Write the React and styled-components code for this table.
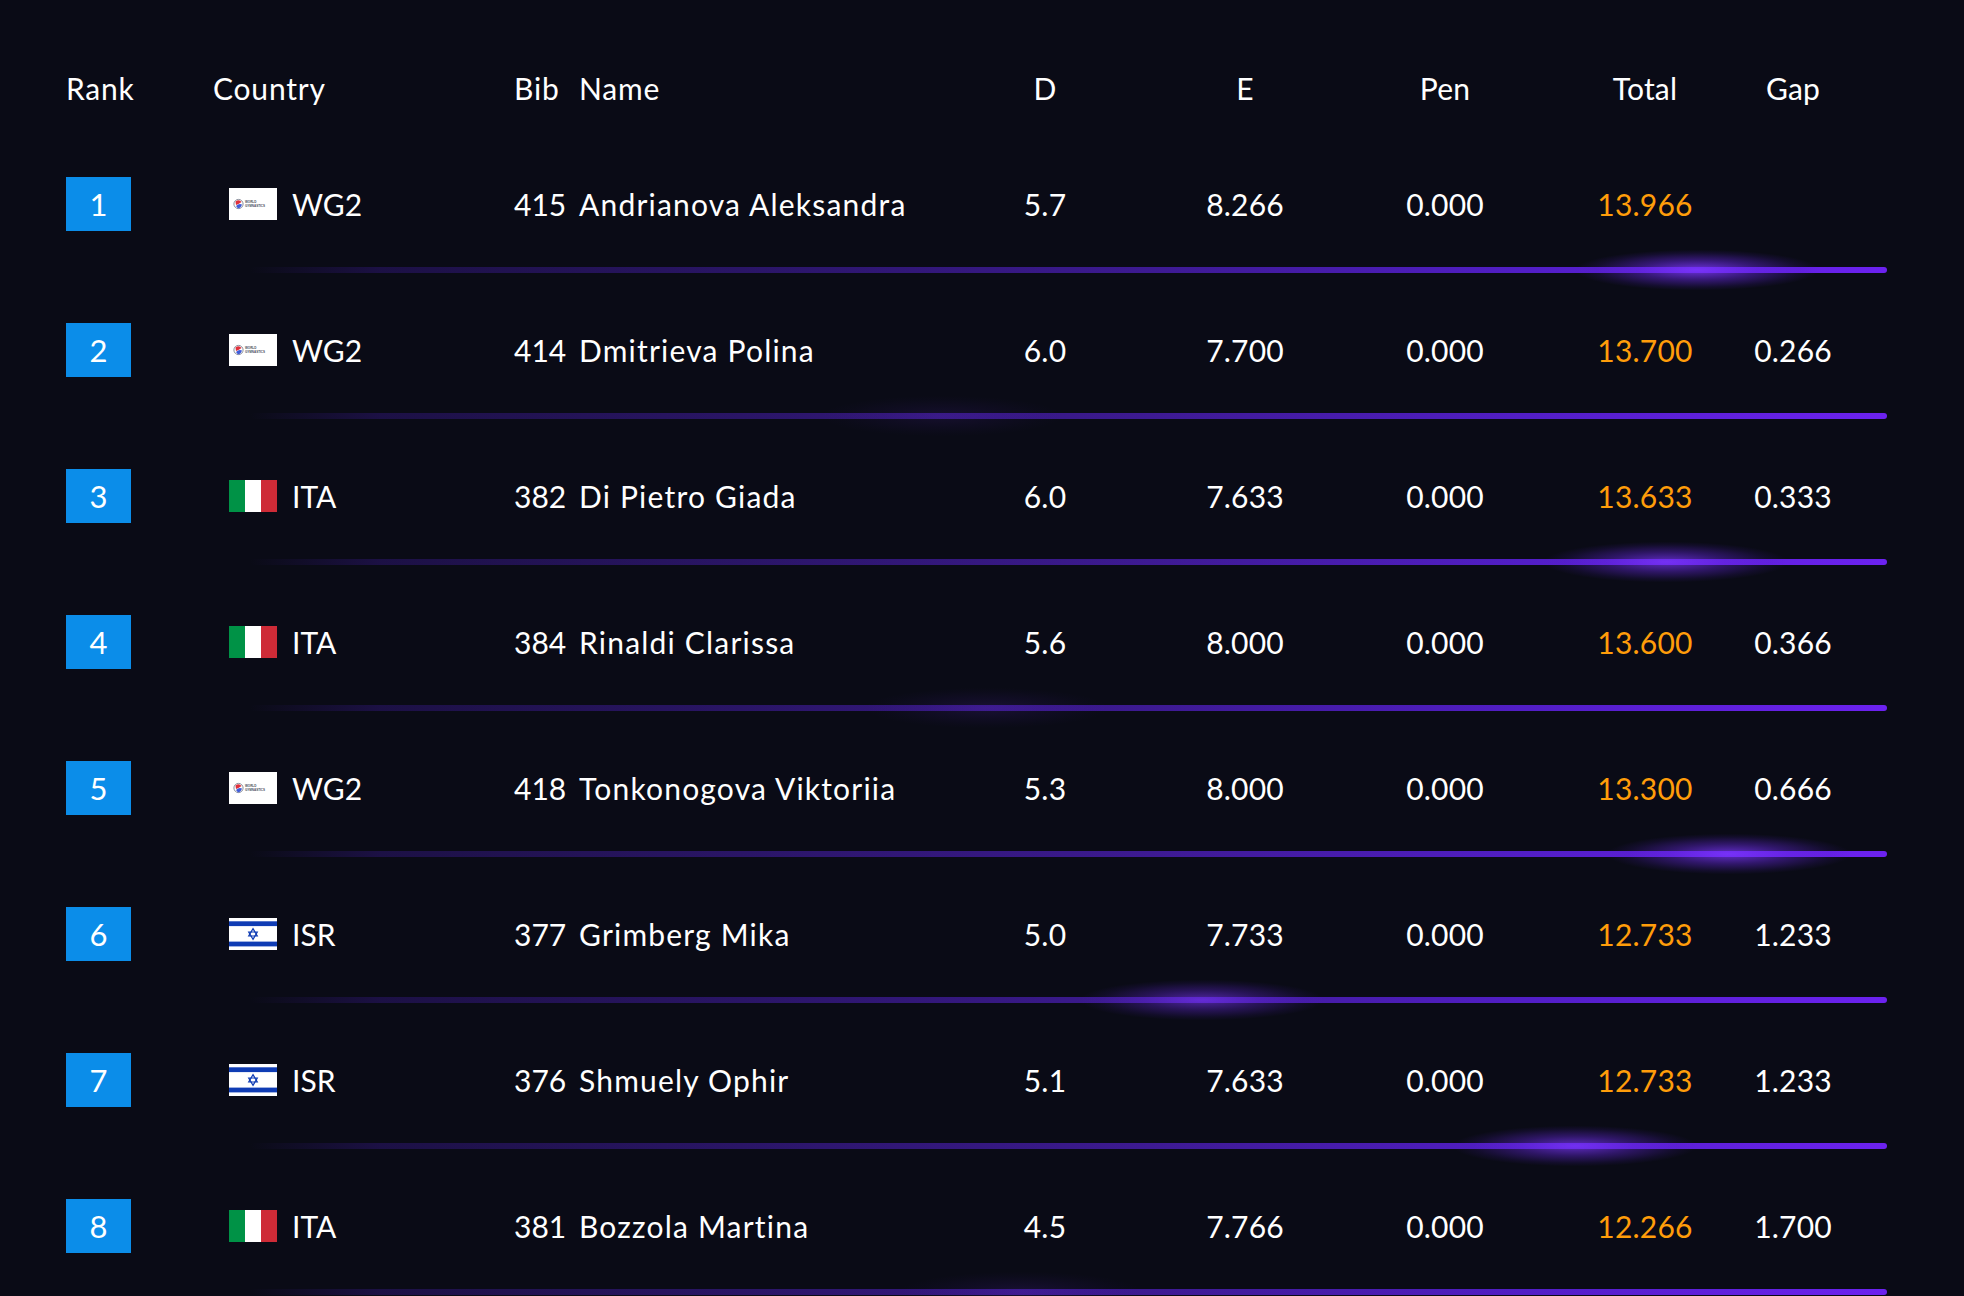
import React from "react";
import styled, { createGlobalStyle } from "styled-components";

const rows = [
  { rank: 1, flag: "wg", country: "WG2", bib: 415, name: "Andrianova Aleksandra", d: "5.7", e: "8.266", pen: "0.000", total: "13.966", gap: "", glowX: 1697, glow: 1 },
  { rank: 2, flag: "wg", country: "WG2", bib: 414, name: "Dmitrieva Polina", d: "6.0", e: "7.700", pen: "0.000", total: "13.700", gap: "0.266", glowX: 942, glow: 0.12 },
  { rank: 3, flag: "ita", country: "ITA", bib: 382, name: "Di Pietro Giada", d: "6.0", e: "7.633", pen: "0.000", total: "13.633", gap: "0.333", glowX: 1666, glow: 0.85 },
  { rank: 4, flag: "ita", country: "ITA", bib: 384, name: "Rinaldi Clarissa", d: "5.6", e: "8.000", pen: "0.000", total: "13.600", gap: "0.366", glowX: 987, glow: 0.15 },
  { rank: 5, flag: "wg", country: "WG2", bib: 418, name: "Tonkonogova Viktoriia", d: "5.3", e: "8.000", pen: "0.000", total: "13.300", gap: "0.666", glowX: 1729, glow: 0.9 },
  { rank: 6, flag: "isr", country: "ISR", bib: 377, name: "Grimberg Mika", d: "5.0", e: "7.733", pen: "0.000", total: "12.733", gap: "1.233", glowX: 1202, glow: 0.7 },
  { rank: 7, flag: "isr", country: "ISR", bib: 376, name: "Shmuely Ophir", d: "5.1", e: "7.633", pen: "0.000", total: "12.733", gap: "1.233", glowX: 1575, glow: 0.85 },
  { rank: 8, flag: "ita", country: "ITA", bib: 381, name: "Bozzola Martina", d: "4.5", e: "7.766", pen: "0.000", total: "12.266", gap: "1.700", glowX: 1021, glow: 0.15 },
];

const LINE_START = 250;

const WGFlag = () => (
  <svg width="48" height="32" viewBox="0 0 48 32">
    <rect width="48" height="32" fill="#fff" />
    <circle cx="9.5" cy="16" r="4.6" fill="none" stroke="#8a8f9c" strokeWidth="1" />
    <path d="M6.5 13.5 Q10 11 12.5 14 Q10 16 7 17 Z" fill="#e0303a" />
    <path d="M7 18 Q10 15 13 16.5 Q12 20 9 20.5 Z" fill="#3f5bd8" />
    <text x="16" y="15.2" fontSize="3" fontFamily="Liberation Sans, sans-serif" fontWeight="700" fill="#4a4f5c">
      WORLD
    </text>
    <text x="16" y="19" fontSize="3" fontFamily="Liberation Sans, sans-serif" fontWeight="700" fill="#4a4f5c">
      GYMNASTICS
    </text>
  </svg>
);

const ItaFlag = () => (
  <svg width="48" height="32" viewBox="0 0 48 32">
    <rect width="16" height="32" fill="#009246" />
    <rect x="16" width="16" height="32" fill="#fff" />
    <rect x="32" width="16" height="32" fill="#ce2b37" />
  </svg>
);

const IsrFlag = () => (
  <svg width="48" height="32" viewBox="0 0 48 32">
    <rect width="48" height="32" fill="#fff" />
    <rect y="3.3" width="48" height="4.8" fill="#0f3cb4" />
    <rect y="23.6" width="48" height="4.8" fill="#0f3cb4" />
    <polygon points="24,10.6 28.3,18 19.7,18" fill="none" stroke="#0f3cb4" strokeWidth="1.2" />
    <polygon points="24,21.4 28.3,14 19.7,14" fill="none" stroke="#0f3cb4" strokeWidth="1.2" />
  </svg>
);

const flags = { wg: WGFlag, ita: ItaFlag, isr: IsrFlag };

const App = () => {
  return (
    <Page>
      <GlobalStyle />
      <HeaderRow>
        <Label>Rank</Label>
        <Label>Country</Label>
        <Label>Bib</Label>
        <Label>Name</Label>
        <Num>D</Num>
        <Num>E</Num>
        <Num>Pen</Num>
        <Num>Total</Num>
        <Num>Gap</Num>
      </HeaderRow>
      {rows.map((r) => {
        const Flag = flags[r.flag];
        return (
          <Row key={r.rank}>
            <RowBody>
              <RankBox>{r.rank}</RankBox>
              <CountryCell>
                <FlagBox>
                  <Flag />
                </FlagBox>
                {r.country}
              </CountryCell>
              <span>{r.bib}</span>
              <Name>{r.name}</Name>
              <Num>{r.d}</Num>
              <Num>{r.e}</Num>
              <Num>{r.pen}</Num>
              <Num $accent>{r.total}</Num>
              <Num>{r.gap}</Num>
            </RowBody>
            <Divider>
              <Glow $x={r.glowX - LINE_START} $strength={r.glow} />
            </Divider>
          </Row>
        );
      })}
    </Page>
  );
};

export default App;

const GlobalStyle = createGlobalStyle`
  html, body {
    margin: 0;
    padding: 0;
    background: #0a0b16;
  }
  body {
    font-family: Lato, "Open Sans", sans-serif;
    color: #ffffff;
    overflow: hidden;
  }
`;

const Page = styled.div`
  min-height: 100vh;
  padding: 68px 0 0 66px;
  box-sizing: border-box;
  background: #0a0b16;
`;

const columns = "147px 301px 65px 366px 200px 200px 200px 200px 96px";

const HeaderRow = styled.div`
  display: grid;
  grid-template-columns: ${columns};
  align-items: center;
  height: 40px;
  margin-bottom: 32px;
  font-size: 30px;
`;

const Label = styled.span`
  letter-spacing: 0.8px;
`;

const Name = styled.span`
  letter-spacing: 1.2px;
`;

const Row = styled.div`
  display: flex;
  flex-direction: column;
  padding-bottom: 13px;
`;

const RowBody = styled.div`
  display: grid;
  grid-template-columns: ${columns};
  align-items: center;
  height: 127px;
  font-size: 30px;
`;

const Num = styled.span`
  text-align: center;
  letter-spacing: 0.2px;
  color: ${(p) => (p.$accent ? "#ff9d0a" : "#ffffff")};
`;

const RankBox = styled.div`
  width: 65px;
  height: 54px;
  background: #0b8de9;
  display: flex;
  align-items: center;
  justify-content: center;
  font-size: 31px;
`;

const CountryCell = styled.div`
  display: flex;
  align-items: center;
  gap: 15px;
  padding-left: 16px;
`;

const FlagBox = styled.div`
  width: 48px;
  height: 32px;
  display: flex;

  svg {
    display: block;
  }
`;

const Divider = styled.div`
  position: relative;
  margin-left: ${LINE_START - 66}px;
  width: ${1887 - LINE_START}px;
  height: 6px;
  border-radius: 3px;
  background: linear-gradient(
    90deg,
    rgba(40, 20, 90, 0) 0%,
    rgba(40, 20, 100, 0.6) 8%,
    #2a1566 30%,
    #3d1a92 55%,
    #521ec6 78%,
    #6c22f0 100%
  );
`;

const Glow = styled.div`
  position: absolute;
  left: ${(p) => p.$x - 120}px;
  top: -17px;
  width: 240px;
  height: 40px;
  opacity: ${(p) => p.$strength};
  background: radial-gradient(
    ellipse at center,
    rgba(125, 55, 255, 0.85) 0%,
    rgba(105, 40, 230, 0.45) 35%,
    rgba(80, 30, 190, 0.15) 60%,
    rgba(60, 20, 160, 0) 72%
  );
  pointer-events: none;
`;
